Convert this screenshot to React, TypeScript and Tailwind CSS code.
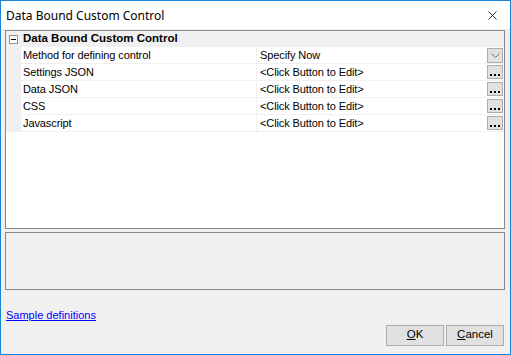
import { X } from "lucide-react";

const rows = [
  { name: "Method for defining control", value: "Specify Now", kind: "drop" },
  { name: "Settings JSON", value: "<Click Button to Edit>", kind: "edit" },
  { name: "Data JSON", value: "<Click Button to Edit>", kind: "edit" },
  { name: "CSS", value: "<Click Button to Edit>", kind: "edit" },
  { name: "Javascript", value: "<Click Button to Edit>", kind: "edit" },
];

const ui = { fontFamily: '"Liberation Sans", Arial, sans-serif' };

export default function App() {
  return (
    <div
      className="w-[511px] h-[355px] border border-[#1883d7] bg-[#f0f0f0] flex flex-col text-[11px] text-black"
      style={ui}
    >
      {/* Title bar */}
      <div className="h-[28px] bg-white flex items-center justify-between pl-[5px] pr-[10px] shrink-0">
        <span className="text-[12px] pt-[1px]" style={{ fontFamily: '"Noto Sans", "Open Sans", sans-serif' }}>
          Data Bound Custom Control
        </span>
        <X className="w-[15px] h-[15px] text-black" strokeWidth={1.3} />
      </div>

      <div className="flex flex-col flex-1 pl-[4px] pr-[5px] pt-[1px]">
        {/* Property grid */}
        <div className="h-[199px] border border-[#828790] bg-white flex flex-col">
          <div className="h-[16px] bg-[#f0f0f0] flex items-center shrink-0">
            <div className="w-[15px] flex justify-center">
              <div className="w-[9px] h-[9px] border border-[#919191] bg-white flex items-center justify-center">
                <div className="w-[5px] h-[1px] bg-black" />
              </div>
            </div>
            <span className="font-bold text-[11.5px] ml-[2px]">Data Bound Custom Control</span>
          </div>
          {rows.map((r) => (
            <div key={r.name} className="h-[17px] flex shrink-0">
              <div className="w-[15px] bg-[#f0f0f0]" />
              <div className="flex flex-1 border-b border-[#f0f0f0]">
                <div className="w-[236px] border-r border-[#f0f0f0] pl-[2px] flex items-center tracking-[-0.1px]">
                  {r.name}
                </div>
                <div className="flex-1 flex items-center justify-between pl-[3px] pr-[1px]">
                  <span className="tracking-[-0.1px]">{r.value}</span>
                  {r.kind === "drop" ? (
                    <div className="w-[16px] h-[15px] bg-[#e1e1e1] border border-[#adadad] flex items-center justify-center">
                      <svg width="9" height="5" viewBox="0 0 9 5">
                        <path d="M0.5 0.5 L4.5 4.5 L8.5 0.5" fill="none" stroke="#707070" strokeWidth="1" />
                      </svg>
                    </div>
                  ) : (
                    <div className="w-[16px] h-[14px] bg-[#e1e1e1] border border-[#adadad] flex items-end justify-center gap-[2px] pb-[2px]">
                      <div className="w-[2px] h-[2px] bg-black" />
                      <div className="w-[2px] h-[2px] bg-black" />
                      <div className="w-[2px] h-[2px] bg-black" />
                    </div>
                  )}
                </div>
              </div>
            </div>
          ))}
        </div>

        {/* Help panel */}
        <div className="h-[58px] mt-[3px] border border-[#828790] bg-[#f0f0f0]" />

        <div className="mt-[17px] pl-[1px]">
          <span className="text-[#0000ff] underline text-[11px]">Sample definitions</span>
        </div>

        <div className="flex justify-end gap-[2px] mt-[1px] pr-[1px]">
          <button className="w-[58px] h-[21px] bg-[#e1e1e1] border border-[#adadad] text-[11.5px]">
            <span className="underline">O</span>K
          </button>
          <button className="w-[58px] h-[21px] bg-[#e1e1e1] border border-[#adadad] text-[11.5px]">
            <span className="underline">C</span>ancel
          </button>
        </div>
      </div>
    </div>
  );
}
